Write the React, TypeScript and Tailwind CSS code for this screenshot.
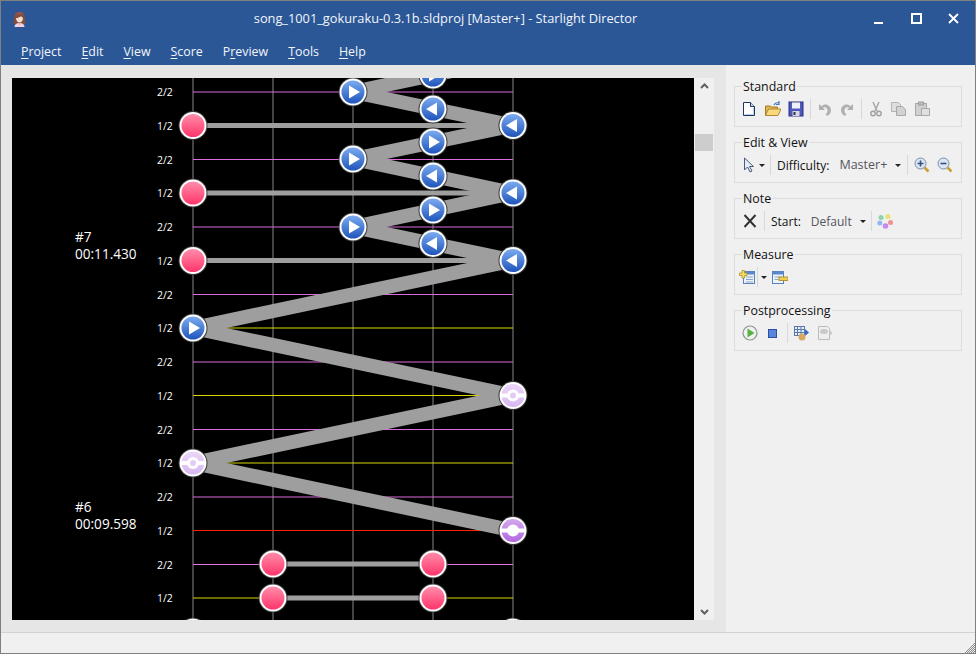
import type { ReactNode } from "react";

const PINK = "#dc6cdc";
const YELLOW = "#d8d800";

const TRACKS = [193, 273, 353, 433, 513];

// lines sitting on a pixel boundary come out as 2px and dimmer, same as the original
const ROWS: { y: number; label: string; color: string }[] = [
  { y: 92, label: "2/2", color: PINK },
  { y: 125.5, label: "1/2", color: YELLOW },
  { y: 159.5, label: "2/2", color: PINK },
  { y: 193, label: "1/2", color: YELLOW },
  { y: 227, label: "2/2", color: PINK },
  { y: 260.5, label: "1/2", color: YELLOW },
  { y: 294.5, label: "2/2", color: PINK },
  { y: 328, label: "1/2", color: YELLOW },
  { y: 362, label: "2/2", color: PINK },
  { y: 395.5, label: "1/2", color: YELLOW },
  { y: 429.5, label: "2/2", color: PINK },
  { y: 463, label: "1/2", color: YELLOW },
  { y: 497, label: "2/2", color: PINK },
  { y: 530.5, label: "1/2", color: "#ff2000" },
  { y: 564.5, label: "2/2", color: "#e878e8" },
  { y: 598, label: "1/2", color: YELLOW },
];

const BANDS = [
  [353, 92, 513, 58],
  [353, 92, 513, 125.5],
  [353, 159, 513, 125.5],
  [353, 159, 513, 193],
  [353, 227, 513, 193],
  [353, 227, 513, 260.5],
  [193, 328, 513, 260.5],
  [193, 328, 513, 395.5],
  [193, 463, 513, 395.5],
  [193, 463, 513, 530.5],
];

const HOLDS = [
  [193, 513, 125.5],
  [193, 513, 193],
  [193, 513, 260.5],
  [273, 433, 564],
  [273, 433, 598],
];

function Note({ x, y, fill, children }: { x: number; y: number; fill: string; children?: ReactNode }) {
  return (
    <g transform={`translate(${x} ${y})`}>
      <circle r="14.5" fill="#3a3a3a" />
      <circle r="13.5" fill="#ffffff" />
      <circle r="11.5" fill={fill} />
      {children}
    </g>
  );
}

function TapNote({ x, y }: { x: number; y: number }) {
  return <Note x={x} y={y} fill="url(#pink)" />;
}

function RightNote({ x, y }: { x: number; y: number }) {
  return (
    <Note x={x} y={y} fill="url(#blue)">
      <polygon points="-4,-6.5 -4,6.5 7,0" fill="#ffffff" />
    </Note>
  );
}

function LeftNote({ x, y }: { x: number; y: number }) {
  return (
    <Note x={x} y={y} fill="url(#blue)">
      <polygon points="4,-6.5 4,6.5 -7,0" fill="#ffffff" />
    </Note>
  );
}

function SlideNote({ x, y, dark }: { x: number; y: number; dark?: boolean }) {
  return (
    <Note x={x} y={y} fill={dark ? "url(#slideDark)" : "url(#slide)"}>
      <rect x="-12" y="-2" width="24" height="4" fill="#ffffff" />
      <circle r="6" fill="#ffffff" />
      {!dark && <circle r="3" fill="#e2ccf6" />}
    </Note>
  );
}

function Score() {
  return (
    <svg viewBox="12 78 682 542" className="block h-full w-full">
      <defs>
        <linearGradient id="pink" x1="0" y1="0" x2="0" y2="1">
          <stop offset="0" stopColor="#ff8dab" />
          <stop offset="1" stopColor="#ff356a" />
        </linearGradient>
        <linearGradient id="blue" x1="0" y1="0" x2="0" y2="1">
          <stop offset="0" stopColor="#7cabf0" />
          <stop offset="1" stopColor="#1f55bb" />
        </linearGradient>
        <linearGradient id="slide" x1="0" y1="0" x2="0" y2="1">
          <stop offset="0" stopColor="#ebd6f9" />
          <stop offset="1" stopColor="#d8b8f0" />
        </linearGradient>
        <linearGradient id="slideDark" x1="0" y1="0" x2="0" y2="1">
          <stop offset="0" stopColor="#d2a8ee" />
          <stop offset="1" stopColor="#b268e0" />
        </linearGradient>
      </defs>

      {TRACKS.map((x) => (
        <line key={x} x1={x} x2={x} y1={78} y2={620} stroke="#5a5a5a" strokeWidth="1.5" />
      ))}
      {ROWS.map((r) => (
        <line key={r.y} x1={193} x2={513} y1={r.y} y2={r.y} stroke={r.color} strokeWidth="1" />
      ))}
      {ROWS.map((r) => (
        <text key={r.y} x={157} y={r.y + 4} fill="#ffffff" fontSize="10.5" fontFamily="'Open Sans', sans-serif">
          {r.label}
        </text>
      ))}
      <text x={75} y={242} fill="#ffffff" fontSize="13.6" fontFamily="'Open Sans', sans-serif">#7</text>
      <text x={75} y={259} fill="#ffffff" fontSize="13.6" fontFamily="'Open Sans', sans-serif">00:11.430</text>
      <text x={75} y={512} fill="#ffffff" fontSize="13.6" fontFamily="'Open Sans', sans-serif">#6</text>
      <text x={75} y={529} fill="#ffffff" fontSize="13.6" fontFamily="'Open Sans', sans-serif">00:09.598</text>

      {HOLDS.map(([a, b, y]) => (
        <line key={`${a}-${y}`} x1={a} x2={b} y1={y} y2={y} stroke="#9e9e9e" strokeWidth="5" />
      ))}
      {BANDS.map(([x1, y1, x2, y2]) => (
        <line key={`${y1}-${y2}`} x1={x1} y1={y1} x2={x2} y2={y2} stroke="#9e9e9e" strokeWidth="14" />
      ))}

      <RightNote x={433} y={75} />
      <RightNote x={353} y={92} />
      <LeftNote x={433} y={109} />
      <TapNote x={193} y={125.5} />
      <LeftNote x={513} y={125.5} />
      <RightNote x={433} y={142} />
      <RightNote x={353} y={159} />
      <LeftNote x={433} y={176} />
      <TapNote x={193} y={193} />
      <LeftNote x={513} y={193} />
      <RightNote x={433} y={210} />
      <RightNote x={353} y={227} />
      <LeftNote x={433} y={243.5} />
      <TapNote x={193} y={260.5} />
      <LeftNote x={513} y={260.5} />
      <RightNote x={193} y={328} />
      <SlideNote x={513} y={395.5} />
      <SlideNote x={193} y={463} />
      <SlideNote x={513} y={530.5} dark />
      <TapNote x={273} y={564} />
      <TapNote x={433} y={564} />
      <TapNote x={273} y={598} />
      <TapNote x={433} y={598} />
      <TapNote x={193} y={632} />
      <TapNote x={513} y={632} />
    </svg>
  );
}

function AppIcon() {
  return (
    <svg width="15" height="17" viewBox="0 0 15 17" className="block">
      <path d="M2 8C2 3 4 1 7.5 1S13 3 13 8c0 2 .5 3.500 1 5H1c.5-1.500 1-3 1-5z" fill="#7d4f3f" />
      <path d="M3 4c1-2 2.500-3 4.500-3 1.500 0 3 .8 4 2-3 0-6 .2-8.500 1z" fill="#a0504a" />
      <path d="M4 7c1.500 0 4-.5 5-2 .5 1 1.500 1.500 2 2 0 2.500-1.500 4.500-3.500 4.500S4 9.500 4 7z" fill="#f7dccf" />
      <path d="M2.500 16c0-2.500 2-4 5-4s5 1.500 5 4z" fill="#f6d0dc" />
      <path d="M7 12.500h1l-.5 1.500z" fill="#c8505a" />
    </svg>
  );
}

function Caret({ className = "" }: { className?: string }) {
  return <span className={`block h-0 w-0 border-x-[3px] border-t-[3px] border-x-transparent border-t-[#222] ${className}`} />;
}

function Sep({ className = "" }: { className?: string }) {
  return <span className={`block h-5 w-px bg-[#d8d8d8] ${className}`} />;
}

function Icon({ children, w = 16, className = "" }: { children: ReactNode; w?: number; className?: string }) {
  return (
    <svg width={w} height="16" viewBox={`0 0 ${w} 16`} className={`block shrink-0 ${className}`}>
      {children}
    </svg>
  );
}

function Group({ title, children }: { title: string; children: ReactNode }) {
  return (
    <fieldset className="h-[50px] w-[228px] border border-[#dcdcdc]">
      <legend className="ml-[7px] px-[1px] pt-[2px] text-[12.4px] leading-4 text-[#111]">{title}</legend>
      <div className="flex h-[28px] items-center">{children}</div>
    </fieldset>
  );
}

function Menu({ first, rest }: { first: string; rest: string }) {
  return (
    <span>
      <span className="underline underline-offset-2">{first}</span>
      {rest}
    </span>
  );
}

export default function App() {
  return (
    <div className="flex h-screen w-screen flex-col overflow-hidden border border-[#7f7f7f] bg-[#f0f0f0] font-['Open_Sans',sans-serif]">
      <header className="h-[64px] shrink-0 bg-[#2b5797] text-[#f2f5fa]">
        <div className="flex h-[34px] items-center">
          <div className="ml-[11px] mt-[3px] w-[16px]">
            <AppIcon />
          </div>
          <div className="flex-1 pt-px text-center text-[12.8px]">song_1001_gokuraku-0.3.1b.sldproj [Master+] - Starlight Director</div>
          <div className="flex w-[112px] items-center pr-[3px]">
            <div className="flex w-[37px] justify-center pr-[5px]">
              <span className="mt-[10px] block h-[2px] w-[9px] bg-white" />
            </div>
            <div className="flex w-[37px] justify-center pr-[3px]">
              <span className="block h-[11px] w-[11px] border-2 border-white" />
            </div>
            <div className="flex w-[37px] justify-center">
              <svg width="11" height="11" viewBox="0 0 11 11">
                <path d="M1 1l9 9M10 1l-9 9" stroke="#ffffff" strokeWidth="1.8" />
              </svg>
            </div>
          </div>
        </div>
        <nav className="flex items-center gap-[20px] pl-[20px] pt-[8px] text-[12.4px]">
          <Menu first="P" rest="roject" />
          <Menu first="E" rest="dit" />
          <Menu first="V" rest="iew" />
          <Menu first="S" rest="core" />
          <span>
            P<span className="underline underline-offset-2">r</span>eview
          </span>
          <Menu first="T" rest="ools" />
          <Menu first="H" rest="elp" />
        </nav>
      </header>

      <div className="flex min-h-0 flex-1">
        <main className="flex w-[725px] shrink-0 bg-[#e6e6e6] pb-[12px] pl-[11px] pt-[13px]">
          <div className="h-[542px] w-[682px] bg-black">
            <Score />
          </div>
          <div className="flex h-[542px] w-[20px] flex-col items-center bg-[#f0f0f0] py-[5px]">
            <svg width="9" height="6" viewBox="0 0 9 6">
              <path d="M1 5l3.5-3.5L8 5" fill="none" stroke="#606060" strokeWidth="2" />
            </svg>
            <span className="mx-auto mt-[45px] block h-[17px] w-[18px] bg-[#cdcdcd]" />
            <span className="flex-1" />
            <svg width="9" height="6" viewBox="0 0 9 6">
              <path d="M1 1l3.5 3.5L8 1" fill="none" stroke="#606060" strokeWidth="2" />
            </svg>
          </div>
        </main>

        <aside className="flex flex-1 flex-col gap-[6px] pl-[8px] pt-[12px]">
          <Group title="Standard">
            <Icon className="ml-[6px]">
              <path d="M2.500 1.500h7l4 4v9h-11z" fill="#ffffff" stroke="#24365c" />
              <path d="M9.500 1.500v4h4" fill="#c8d8ee" stroke="#24365c" />
              <path d="M3.500 13.500h9v-7" fill="none" stroke="#b8cce8" />
            </Icon>
            <Icon className="ml-[8px]">
              <path d="M0.500 14.500V5h5l1 1h6v8.500z" fill="#e2b64e" stroke="#a07a28" />
              <path d="M0.500 14.500l3-6.500h12.500l-3 6.500z" fill="#f9d97c" stroke="#b08a30" />
              <path d="M9 4c1-2 3-2.500 5-2.500M14 0v3.500h-3" fill="none" stroke="#4a78b8" strokeWidth="1.2" />
            </Icon>
            <Icon className="ml-[7px]">
              <rect x="1" y="1" width="14" height="14" fill="#4e58bc" stroke="#2a2f80" />
              <rect x="4" y="1.500" width="8" height="6" fill="#eef0fa" />
              <rect x="4.500" y="10" width="7" height="5" fill="#d8d8e4" />
              <rect x="5.500" y="11" width="2" height="3" fill="#333" />
            </Icon>
            <Sep className="ml-[6px]" />
            <Icon className="ml-[6px]">
              <path d="M2 3v6h6L5.800 6.800c2-1.300 4.700-.3 4.700 2.700 0 1.500-.8 3-2 4l2 1.500c2-1.500 3.500-3.500 3.500-5.500C14 4 8 1.500 4.500 5.300z" fill="#b0b0b0" />
            </Icon>
            <Icon className="ml-[6px]">
              <path d="M14 3v6H8l2.200-2.200C8.200 5.500 5.500 6.500 5.500 9.500c0 1.500.8 3 2 4l-2 1.500C3.500 13.500 2 11.500 2 9.500 2 4 8 1.500 11.500 5.300z" fill="#b0b0b0" />
            </Icon>
            <Sep className="ml-[6px]" />
            <Icon className="ml-[6px]">
              <path d="M5 1l4 9M11 1L7 10" stroke="#a8a8a8" strokeWidth="1.5" />
              <circle cx="5" cy="12.500" r="2.200" fill="none" stroke="#a0a0a0" strokeWidth="1.4" />
              <circle cx="11" cy="12.500" r="2.200" fill="none" stroke="#a0a0a0" strokeWidth="1.4" />
            </Icon>
            <Icon className="ml-[6px]">
              <path d="M1.500 1.500h7l2 2v7h-9z" fill="#dedede" stroke="#b4b4b4" />
              <path d="M6.500 5.500h6l3 3v6h-9z" fill="#d2d2d2" stroke="#a8a8a8" />
            </Icon>
            <Icon className="ml-[8px]">
              <rect x="1.500" y="2.500" width="11" height="12" fill="#d0d0d0" stroke="#a8a8a8" />
              <rect x="4.500" y="1" width="5" height="3" fill="#bcbcbc" stroke="#a0a0a0" />
              <path d="M7.500 7.500h8v7h-8z" fill="#e0e0e0" stroke="#a8a8a8" />
            </Icon>
          </Group>

          <Group title="Edit &amp; View">
            <Icon w={12} className="ml-[8px]">
              <path d="M1.500 1v12l3-3 2.500 5 2-1-2.500-4.500h4z" fill="#e4ecf8" stroke="#4a5a78" />
            </Icon>
            <Caret className="ml-[4px]" />
            <Sep className="ml-[5px]" />
            <span className="ml-[6px] pt-px text-[12px] text-[#111]">Difficulty:</span>
            <span className="ml-[10px] pt-px text-[12.5px] text-[#555560]">Master+</span>
            <Caret className="ml-[8px]" />
            <Sep className="ml-[6px]" />
            <Icon className="ml-[6px]">
              <circle cx="6.500" cy="6.500" r="5.500" fill="#dbe6f4" stroke="#7a8ca8" />
              <path d="M3.500 6.500h6M6.500 3.500v6" stroke="#3a5080" strokeWidth="1.6" />
              <path d="M10.500 10.500l4 4" stroke="#c8a030" strokeWidth="2.5" />
            </Icon>
            <Icon className="ml-[7px]">
              <circle cx="6.500" cy="6.500" r="5.500" fill="#dbe6f4" stroke="#7a8ca8" />
              <path d="M3.500 6.500h6" stroke="#3a5080" strokeWidth="1.6" />
              <path d="M10.500 10.500l4 4" stroke="#c8a030" strokeWidth="2.5" />
            </Icon>
          </Group>

          <Group title="Note">
            <Icon w={14} className="ml-[8px]">
              <path d="M1.500 2l11 12M12.500 2l-11 12" stroke="#333" strokeWidth="2" />
            </Icon>
            <Sep className="ml-[7px]" />
            <span className="ml-[6px] pt-px text-[12px] text-[#111]">Start:</span>
            <span className="ml-[10px] pt-px text-[12px] text-[#555560]">Default</span>
            <Caret className="ml-[8px]" />
            <Sep className="ml-[5px]" />
            <Icon className="ml-[5px]">
              <circle cx="4" cy="4.500" r="2.500" fill="#8fd4a8" />
              <circle cx="11" cy="3.500" r="2.500" fill="#ece070" />
              <circle cx="13.500" cy="9.500" r="2.500" fill="#f09090" />
              <circle cx="2.800" cy="10" r="2.500" fill="#90b8f0" />
              <circle cx="8.500" cy="13" r="2.800" fill="#c888f0" />
            </Icon>
          </Group>

          <Group title="Measure">
            <Icon className="ml-[4px]">
              <rect x="4.500" y="2.500" width="11" height="12" fill="#eef3fa" stroke="#5a80b8" />
              <rect x="4.500" y="2.500" width="11" height="3" fill="#5a88d0" />
              <path d="M7 8h7M7 10.500h7M7 13h7" stroke="#8aa4c8" />
              <path d="M3 1.500h2.500V4H8v2.500H5.500V9H3V6.500H.5V4H3z" fill="#f6dc60" stroke="#b09020" strokeWidth=".8" />
            </Icon>
            <Sep className="ml-[2px]" />
            <Caret className="ml-[3px]" />
            <Icon className="ml-[5px]">
              <rect x="0.500" y="2.500" width="11" height="12" fill="#eef3fa" stroke="#5a80b8" />
              <rect x="0.500" y="2.500" width="11" height="3" fill="#5a88d0" />
              <path d="M2.500 8h7M2.500 10.500h4" stroke="#8aa4c8" />
              <rect x="7" y="8" width="9" height="3.500" fill="#f0d050" stroke="#a08820" strokeWidth=".8" />
            </Icon>
          </Group>

          <Group title="Postprocessing">
            <Icon className="ml-[7px]">
              <circle cx="8" cy="8" r="7" fill="#eef2f0" stroke="#8a9490" strokeWidth="1.2" />
              <path d="M5.500 3.500L12.500 8l-7 4.500z" fill="#58b040" />
            </Icon>
            <span className="ml-[10px] block h-[9px] w-[9px] border border-[#2a4ea8] bg-[#5a84dc]" />
            <Sep className="ml-[10px]" />
            <Icon className="ml-[6px]">
              <rect x="0.500" y="1.500" width="10" height="9" fill="#e8eef8" stroke="#5a78a8" />
              <path d="M3.500 1.500v9M7 1.500v9M0.500 4.500h10M0.500 7.500h10" stroke="#5a78a8" />
              <path d="M11 4l4 3.500-4 3.500z" fill="#3868c8" />
              <ellipse cx="8" cy="12" rx="3.500" ry="3.500" fill="#d8a860" />
            </Icon>
            <Icon className="ml-[7px]">
              <path d="M1.500 1.500h9l2 2v11h-11z" fill="#eeeeee" stroke="#bcbcbc" />
              <ellipse cx="7" cy="6.500" rx="4" ry="2.500" fill="#c8c8c8" />
              <path d="M12.500 5l3 3-3 3z" fill="#c8c8c8" />
            </Icon>
          </Group>
        </aside>
      </div>

      <footer className="relative h-[21px] shrink-0 border-t border-[#d2d2d2] bg-[#f0f0f0]">
        <span className="absolute bottom-0 right-0 h-[11px] w-[11px] bg-[repeating-conic-gradient(#8a8a8a_0_25%,#f0f0f0_0_50%)] bg-[length:2px_2px] [clip-path:polygon(100%_0,100%_100%,0_100%)]" />
      </footer>
    </div>
  );
}
